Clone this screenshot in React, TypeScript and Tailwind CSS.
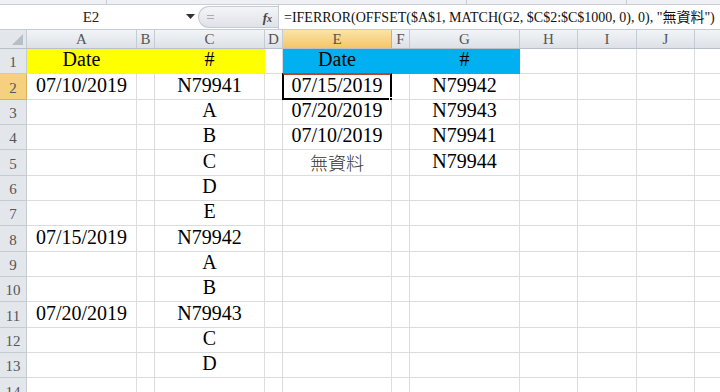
import React from "react";

const cols = [
  { name: "A", w: 110 },
  { name: "B", w: 18 },
  { name: "C", w: 110 },
  { name: "D", w: 18 },
  { name: "E", w: 109 },
  { name: "F", w: 18 },
  { name: "G", w: 110 },
  { name: "H", w: 58 },
  { name: "I", w: 59 },
  { name: "J", w: 58 },
  { name: "K", w: 100 },
];

const rowHeights = [25, 26, 25, 25, 26, 25, 25, 26, 25, 25, 26, 25, 25, 26];

// row -> column -> text
const data: Record<number, Record<string, string>> = {
  1: { A: "Date", C: "#", E: "Date", G: "#" },
  2: { A: "07/10/2019", C: "N79941", E: "07/15/2019", G: "N79942" },
  3: { C: "A", E: "07/20/2019", G: "N79943" },
  4: { C: "B", E: "07/10/2019", G: "N79941" },
  5: { C: "C", E: "無資料", G: "N79944" },
  6: { C: "D" },
  7: { C: "E" },
  8: { A: "07/15/2019", C: "N79942" },
  9: { C: "A" },
  10: { C: "B" },
  11: { A: "07/20/2019", C: "N79943" },
  12: { C: "C" },
  13: { C: "D" },
};

const serif = "font-['Liberation_Serif','Noto_Sans_CJK_TC',serif]";

function fillFor(row: number, col: string) {
  if (row !== 1) return null;
  if (col === "A" || col === "B" || col === "C") return "bg-[#ffff00] border-[#ffff00]";
  if (col === "E" || col === "F" || col === "G") return "bg-[#00b0f0] border-[#00b0f0]";
  return null;
}

function FormulaBar() {
  return (
    <div className="flex flex-col">
      <div className="flex h-[5px] bg-[#eef0f3] border-b border-[#c9ced6]">
        <div className="w-[107px] border-r border-[#c9ced6]" />
        <div className="w-[360px] border-r border-[#c9ced6]" />
        <div className="w-[160px] border-r border-[#c9ced6]" />
      </div>
      <div className="flex h-[24px] bg-white items-stretch">
        <div className="relative w-[198px] flex items-center justify-center">
          <span className={`${serif} text-[15px] text-[#222] -ml-[16px]`}>E2</span>
          <svg className="absolute left-[186px] top-[9px]" width="9" height="5" viewBox="0 0 9 5">
            <path d="M0 0 L9 0 L4.5 5 Z" fill="#333" />
          </svg>
        </div>
        <div className="w-[80px] my-[1px] rounded-l-full bg-gradient-to-b from-[#f4f5f7] to-[#dfe2e7] border border-[#c6cbd3] border-r-0 flex items-center justify-between pl-[8px] pr-[6px]">
          <div className="flex flex-col gap-[2px]">
            <div className="w-[7px] h-[1px] bg-[#a9aeb6]" />
            <div className="w-[7px] h-[1px] bg-[#a9aeb6]" />
          </div>
          <span className="font-['Liberation_Serif',serif] italic font-bold text-[13px] text-[#444] leading-none">
            f<span className="text-[10px]">x</span>
          </span>
        </div>
        <div className="flex-1 border-l border-[#c6cbd3] flex items-center pl-[5px] overflow-hidden whitespace-nowrap">
          <span className={`${serif} text-[14px] text-[#111]`}>
            =IFERROR(OFFSET($A$1, MATCH(G2, $C$2:$C$1000, 0), 0), "無資料")
          </span>
        </div>
      </div>
      <div className="h-[1px] bg-[#c6cbd3]" />
    </div>
  );
}

function HeaderRow() {
  return (
    <div className="flex h-[19px] border-b border-[#b9c0c9]">
      <div className="relative w-[27px] shrink-0 bg-[#e3e7ec] border-r border-[#c5cbd3]">
        <svg className="absolute right-[3px] bottom-[3px]" width="11" height="11" viewBox="0 0 11 11">
          <path d="M11 0 L11 11 L0 11 Z" fill="#b8bec6" />
        </svg>
      </div>
      {cols.map((c) => (
        <div
          key={c.name}
          style={{ width: c.w }}
          className={`shrink-0 flex items-center justify-center border-r ${
            c.name === "E"
              ? "bg-gradient-to-b from-[#fbe3a7] to-[#f4c766] border-[#d9b15a]"
              : "bg-gradient-to-b from-[#f2f4f7] to-[#dde1e7] border-[#c5cbd3]"
          }`}
        >
          {c.name !== "K" && (
            <span className={`${serif} text-[15px] text-[#555] leading-none`}>{c.name}</span>
          )}
        </div>
      ))}
    </div>
  );
}

function SheetRow({ row, h }: { row: number; h: number }) {
  const cells = data[row] || {};
  return (
    <div className="flex" style={{ height: h }}>
      <div
        className={`w-[27px] shrink-0 flex items-end justify-center pb-[1px] border-r border-b ${
          row === 2 ? "bg-[#f6cf7f] border-[#d9b15a]" : "bg-[#e3e7ec] border-[#c5cbd3]"
        }`}
      >
        <span className={`${serif} text-[15px] text-[#555] leading-tight`}>{row}</span>
      </div>
      {cols.map((c) => {
        const fill = fillFor(row, c.name);
        const text = cells[c.name];
        const cjk = text === "無資料";
        const selected = row === 2 && c.name === "E";
        return (
          <div
            key={c.name}
            style={{ width: c.w }}
            className={`relative shrink-0 flex items-end justify-center pb-[1px] border-r border-b ${
              fill ?? "bg-white border-[#dadcdd]"
            }`}
          >
            {text && (
              <span
                className={`whitespace-nowrap leading-none pb-[3px] ${
                  cjk
                    ? "font-['Noto_Sans_CJK_TC',sans-serif] text-[18px] text-[#333] font-light pb-[2px]"
                    : `${serif} text-[20px] text-black`
                }`}
              >
                {text}
              </span>
            )}
            {selected && (
              <>
                <div className="absolute -left-[1px] -top-[1px] -right-[1px] -bottom-[1px] border-2 border-black border-t-[#c0432a]" />
                <div className="absolute -right-[3px] -bottom-[3px] w-[5px] h-[5px] bg-black border border-white" />
              </>
            )}
          </div>
        );
      })}
    </div>
  );
}

export default function App() {
  return (
    <div className="w-[720px] h-[392px] overflow-hidden bg-white">
      <FormulaBar />
      <HeaderRow />
      {rowHeights.map((h, i) => (
        <SheetRow key={i} row={i + 1} h={h} />
      ))}
    </div>
  );
}
